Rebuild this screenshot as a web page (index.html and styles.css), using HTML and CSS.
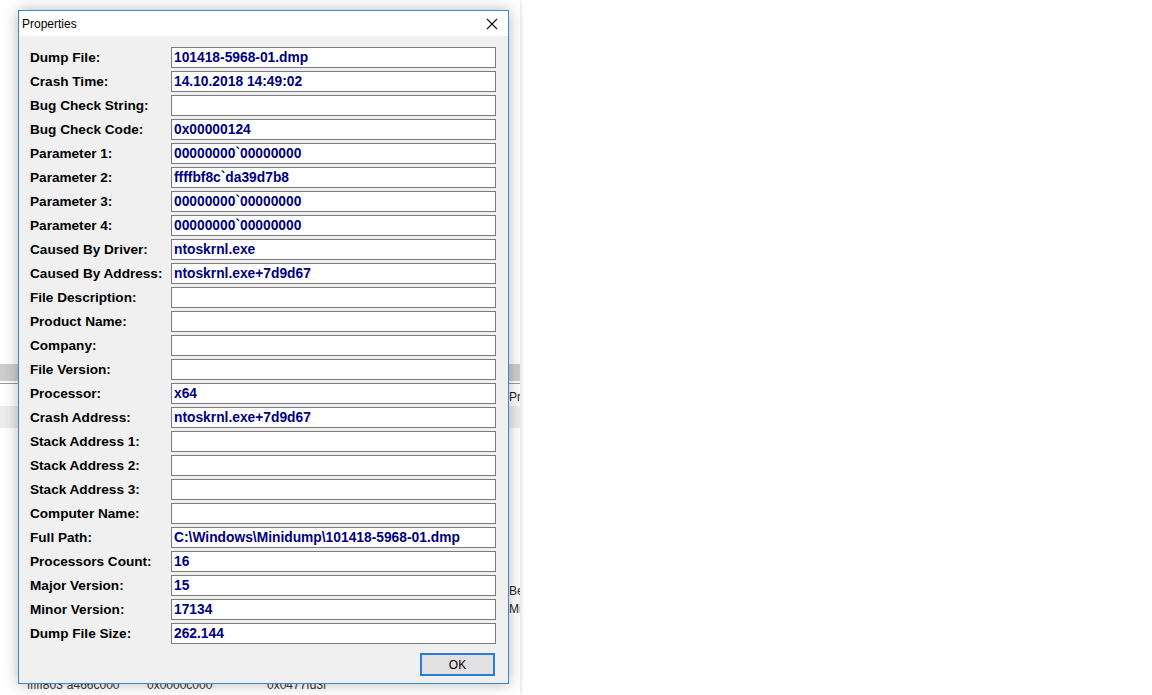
FILE: index.html
```html
<!DOCTYPE html>
<html>
  <head>
    <title>Properties</title>
    <link rel="stylesheet" href="styles.css">
  </head>
  <body>
    <div class="desktop">
      <div class="app">
        <div class="app-band"></div>
        <div class="app-sep"></div>
        <div class="app-head"><span class="col-gap"></span>Processor</div>
        <div class="app-row alt"></div>
        <div class="app-row spacer"></div>
        <div class="app-row"><span class="col-gap"></span>Beta</div>
        <div class="app-row"><span class="col-gap"></span>Microsoft</div>
        <div class="app-row spacer2"></div>
        <div class="app-row last">
          <span class="cell c1">fffff803`a466c000</span>
          <span class="cell c2">0x0000c000</span>
          <span class="cell c3">0x0477fd3f</span>
        </div>
      </div>

      <div class="dialog">
        <div class="dialog-title">
          <span>Properties</span>
          <svg class="close-icon" width="12" height="12" viewBox="0 0 12 12">
            <path d="M1 1 L11 11 M11 1 L1 11" stroke="#111" stroke-width="1.1" fill="none"/>
          </svg>
        </div>
        <div class="dialog-body">
          <div class="props">
            <label>Dump File:</label><div class="field">101418-5968-01.dmp</div>
            <label>Crash Time:</label><div class="field">14.10.2018 14:49:02</div>
            <label>Bug Check String:</label><div class="field"></div>
            <label>Bug Check Code:</label><div class="field">0x00000124</div>
            <label>Parameter 1:</label><div class="field">00000000`00000000</div>
            <label>Parameter 2:</label><div class="field">ffffbf8c`da39d7b8</div>
            <label>Parameter 3:</label><div class="field">00000000`00000000</div>
            <label>Parameter 4:</label><div class="field">00000000`00000000</div>
            <label>Caused By Driver:</label><div class="field">ntoskrnl.exe</div>
            <label>Caused By Address:</label><div class="field">ntoskrnl.exe+7d9d67</div>
            <label>File Description:</label><div class="field"></div>
            <label>Product Name:</label><div class="field"></div>
            <label>Company:</label><div class="field"></div>
            <label>File Version:</label><div class="field"></div>
            <label>Processor:</label><div class="field">x64</div>
            <label>Crash Address:</label><div class="field">ntoskrnl.exe+7d9d67</div>
            <label>Stack Address 1:</label><div class="field"></div>
            <label>Stack Address 2:</label><div class="field"></div>
            <label>Stack Address 3:</label><div class="field"></div>
            <label>Computer Name:</label><div class="field"></div>
            <label>Full Path:</label><div class="field">C:\Windows\Minidump\101418-5968-01.dmp</div>
            <label>Processors Count:</label><div class="field">16</div>
            <label>Major Version:</label><div class="field">15</div>
            <label>Minor Version:</label><div class="field">17134</div>
            <label>Dump File Size:</label><div class="field">262.144</div>
          </div>
          <div class="dialog-buttons">
            <button class="ok-btn">OK</button>
          </div>
        </div>
      </div>
    </div>
  </body>
</html>
```

FILE: styles.css
```css
body {
  margin: 0;
  background: #fff;
  font-family: "Liberation Sans", Arial, sans-serif;
}
.desktop {
  position: relative;
  width: 1152px;
  height: 695px;
  overflow: hidden;
}

/* window behind the dialog */
.app {
  width: 520px;
  height: 695px;
  background: #fff;
  box-shadow: 1px 0 4px rgba(0, 0, 0, 0.12);
  overflow: hidden;
  display: flex;
  flex-direction: column;
  font-size: 12px;
  color: #222;
  white-space: nowrap;
}
.app-band {
  margin-top: 364px;
  height: 17px;
  background: #cdcdcd;
}
.app-sep {
  margin-top: 2px;
  height: 1px;
  background: #9a9a9a;
}
.app-head {
  height: 22px;
  line-height: 26px;
  display: flex;
}
.col-gap {
  display: inline-block;
  width: 509px;
  flex: none;
}
.app-row {
  height: 18px;
  line-height: 18px;
  display: flex;
}
.app-row.alt {
  height: 22px;
  background: #ececec;
}
.app-row.spacer {
  height: 155px;
}
.app-row.spacer2 {
  height: 60px;
}
.app-row.last {
  height: 17px;
  line-height: 15px;
  color: #333;
}
.cell {
  display: inline-block;
}
.c1 {
  width: 120px;
  padding-left: 27px;
}
.c2 {
  width: 120px;
}

/* the dialog */
.dialog {
  position: absolute;
  left: 18px;
  top: 10px;
  width: 491px;
  height: 674px;
  box-sizing: border-box;
  border: 1px solid #3b87d0;
  background: #f0f0f0;
  box-shadow: 0 0 14px rgba(0, 0, 0, 0.28);
  display: flex;
  flex-direction: column;
}
.dialog-title {
  height: 25px;
  background: #fff;
  display: flex;
  align-items: center;
  justify-content: space-between;
  padding: 0 10px 0 3px;
  font-size: 12px;
  color: #000;
}
.close-icon {
  display: block;
}
.dialog-body {
  flex: 1;
  padding: 11px 13px 0 11px;
}
.props {
  display: grid;
  grid-template-columns: 141px 325px;
  grid-auto-rows: 21px;
  row-gap: 3px;
}
.props label {
  font-size: 13.6px;
  font-weight: bold;
  color: #000;
  line-height: 21px;
}
.field {
  box-sizing: border-box;
  height: 21px;
  border: 1px solid #7c7c7c;
  background: #fff;
  padding-left: 2px;
  font-size: 13.8px;
  font-weight: bold;
  line-height: 19px;
  color: #000080;
  white-space: nowrap;
  overflow: hidden;
}
.dialog-buttons {
  display: flex;
  justify-content: flex-end;
  margin-top: 9px;
}
.ok-btn {
  width: 75px;
  height: 23px;
  box-sizing: border-box;
  border: 2px solid #2b7dd0;
  background: #e1e1e1;
  font-family: "Liberation Sans", Arial, sans-serif;
  font-size: 12px;
  color: #000;
  padding: 0;
}
```
